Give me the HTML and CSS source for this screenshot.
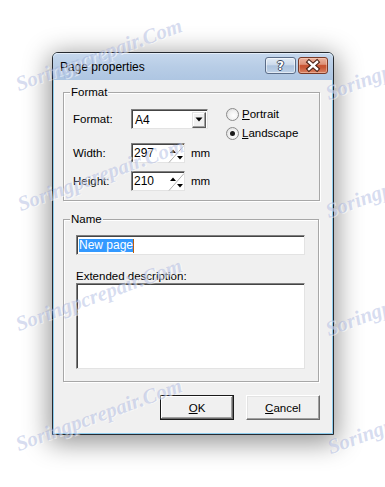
FILE: index.html
```html
<!DOCTYPE html>
<html>
<head>
<meta charset="utf-8">
<link rel="stylesheet" href="styles.css">
</head>
<body>
<div class="window">
  <div class="titlebar">
    <span class="title">Page properties</span>
    <div class="caption-btns">
      <div class="cbtn help"><span class="qmark">?</span></div>
      <div class="cbtn close">
        <svg width="28" height="15" viewBox="0 0 28 15">
          <path d="M10 4 L18 11 M18 4 L10 11" stroke="#4a2216" stroke-width="4.6" stroke-linecap="square"/>
          <path d="M10 4 L18 11 M18 4 L10 11" stroke="#ffffff" stroke-width="2.4" stroke-linecap="square"/>
        </svg>
      </div>
    </div>
  </div>
  <div class="client">
    <div class="group format-group">
      <span class="legend">Format</span>
      <div class="fields">
        <div class="row r1">
          <span class="lbl">Format:</span>
          <div class="combo">
            <span class="val">A4</span>
            <div class="dd">
              <svg width="8" height="5" viewBox="0 0 8 5"><polygon points="0.5,0.5 7.5,0.5 4,4.5" fill="#000"/></svg>
            </div>
          </div>
        </div>
        <div class="row r2">
          <span class="lbl">Width:</span>
          <div class="spin">
            <span class="val">297</span>
            <svg class="arrows" width="16" height="18" viewBox="0 0 16 18">
              <line x1="1" y1="17.5" x2="16" y2="0.5" stroke="#b0b0b0" stroke-width="1"/>
              <polygon points="2,8 5,4.5 8,8" fill="#000"/>
              <polygon points="9,11 15,11 12,14.5" fill="#000"/>
            </svg>
          </div>
          <span class="unit">mm</span>
        </div>
        <div class="row r3">
          <span class="lbl">Height:</span>
          <div class="spin">
            <span class="val">210</span>
            <svg class="arrows" width="16" height="18" viewBox="0 0 16 18">
              <line x1="1" y1="17.5" x2="16" y2="0.5" stroke="#b0b0b0" stroke-width="1"/>
              <polygon points="2,8 5,4.5 8,8" fill="#000"/>
              <polygon points="9,11 15,11 12,14.5" fill="#000"/>
            </svg>
          </div>
          <span class="unit">mm</span>
        </div>
      </div>
      <div class="radios">
        <div class="radio"><span class="circle"></span><span class="rtext"><u>P</u>ortrait</span></div>
        <div class="radio"><span class="circle checked"></span><span class="rtext"><u>L</u>andscape</span></div>
      </div>
    </div>

    <div class="group name-group">
      <span class="legend">Name</span>
      <div class="textbox"><span class="sel">New page</span><span class="caret"></span></div>
      <div class="desc-label">Extended description:</div>
      <div class="textarea"></div>
    </div>

    <div class="buttons">
      <div class="btn default"><span><u>O</u>K</span></div>
      <div class="btn"><span><u>C</u>ancel</span></div>
    </div>
  </div>
</div>

<span class="wm wm1">Soringpcrepair.Com</span>
<span class="wm wm2">Soringpcrepair.Com</span>
<span class="wm wm3">Soringpcrepair.Com</span>
<span class="wm wm4">Soringpcrepair.Com</span>
<span class="wm wm5">Soringpcrepair.Com</span>
<span class="wm wm6">Soringpcrepair.Com</span>
<span class="wm wm7">Soringpcrepair.Com</span>
<span class="wm wm8">Soringpcrepair.Com</span>
</body>
</html>
```
FILE: styles.css
```css
html, body {
  margin: 0;
  padding: 0;
  background: #ffffff;
}
body {
  position: relative;
  width: 385px;
  height: 487px;
  overflow: hidden;
  font-family: "Liberation Sans", Arial, sans-serif;
  font-size: 11px;
  color: #000;
}
.window {
  box-sizing: border-box;
  margin: 52px 0 0 52px;
  width: 282px;
  height: 383px;
  border: 1px solid #262a30;
  border-radius: 6px 6px 0 0;
  background: #8ecdee;
  display: flex;
  flex-direction: column;
  box-shadow: 0 5px 26px 3px rgba(0, 0, 0, 0.42);
}
.titlebar {
  height: 27px;
  flex: none;
  display: flex;
  align-items: flex-start;
  justify-content: space-between;
  padding: 0 5px 0 7px;
  border-radius: 5px 5px 0 0;
  background: linear-gradient(#c6d8ed 0%, #b8cde6 50%, #aec6e2 100%);
  box-shadow: inset 0 1px 0 #e4eef9;
}
.title {
  font-family: "Liberation Sans", Arial, sans-serif;
  font-size: 12px;
  line-height: 14px;
  margin-top: 7px;
  color: #000;
}
.caption-btns {
  display: flex;
  gap: 2px;
  margin-top: 4px;
}
.cbtn {
  box-sizing: border-box;
  height: 17px;
  border: 1px solid #5b6d88;
  border-radius: 3px;
  display: flex;
  align-items: center;
  justify-content: center;
}
.help {
  width: 31px;
  background: linear-gradient(#e3ecf6 0%, #ccdaeb 45%, #adc3de 52%, #bfd2e8 100%);
  box-shadow: inset 0 0 0 1px rgba(255, 255, 255, 0.55);
}
.qmark {
  font-family: "DejaVu Sans", sans-serif;
  font-weight: bold;
  font-size: 12px;
  line-height: 12px;
  color: #fff;
  text-shadow: 1px 0 0 #3b4a60, -1px 0 0 #3b4a60, 0 1px 0 #3b4a60, 0 -1px 0 #3b4a60;
}
.close {
  width: 30px;
  border-color: #7a3a28;
  background: linear-gradient(#eab29e 0%, #de9278 42%, #c85433 50%, #c75634 62%, #d98264 100%);
  box-shadow: inset 0 0 0 1px rgba(255, 220, 200, 0.45);
}
.client {
  flex: 1;
  margin: 0 1px 1px 1px;
  background: #f0f0f0;
  padding: 12px 12px 0 9px;
  display: flex;
  flex-direction: column;
}
.group {
  position: relative;
  box-sizing: border-box;
  border: 1px solid #a7a7a7;
  box-shadow: inset 1px 1px 0 #ffffff, 1px 1px 0 #ffffff;
}
.legend {
  position: absolute;
  left: 6px;
  top: -7px;
  padding: 0 1px;
  line-height: 13px;
  font-size: 11.5px;
  background: #f0f0f0;
}
.format-group {
  width: 257px;
  height: 109px;
  display: flex;
  padding: 16px 0 0 9px;
}
.fields {
  width: 153px;
  display: flex;
  flex-direction: column;
}
.row {
  display: flex;
  align-items: center;
  height: 20px;
  font-size: 11.5px;
}
.r2 { margin-top: 14px; }
.r3 { margin-top: 8px; }
.lbl {
  width: 58px;
  flex: none;
}
.combo, .spin, .textbox, .textarea {
  box-sizing: border-box;
  background: #fff;
  border: 1px solid;
  border-color: #7f7f7f #e3e3e3 #e3e3e3 #7f7f7f;
  box-shadow: inset 1px 1px 0 #444;
}
.combo {
  width: 77px;
  height: 20px;
  display: flex;
  align-items: center;
  padding-left: 3px;
}
.combo .val { flex: 1; margin-top: 2px; font-size: 12px; }
.dd {
  box-sizing: border-box;
  width: 14px;
  height: 16px;
  margin-right: 1px;
  margin-top: 1px;
  background: #f0f0f0;
  border: 1px solid;
  border-color: #e3e3e3 #5a5a5a #5a5a5a #e3e3e3;
  box-shadow: inset -1px -1px 0 #a0a0a0, inset 1px 1px 0 #fff;
  display: flex;
  align-items: center;
  justify-content: center;
}
.spin {
  width: 54px;
  height: 20px;
  display: flex;
  align-items: center;
  padding-left: 2px;
}
.spin .val { flex: 1; font-size: 12px; }
.spin .arrows { flex: none; margin-top: 1px; }
.unit { margin-left: 6px; }
.radios {
  display: flex;
  flex-direction: column;
  gap: 3px;
  margin-top: -3px;
}
.radio {
  display: flex;
  align-items: center;
  height: 16px;
  gap: 3px;
}
.circle {
  box-sizing: border-box;
  width: 13px;
  height: 13px;
  border-radius: 50%;
  border: 1px solid #8b8b8b;
  background: radial-gradient(circle at 60% 60%, #ffffff 0%, #f2f2f2 45%, #d6d6d6 100%);
  display: flex;
  align-items: center;
  justify-content: center;
}
.circle.checked::after {
  content: "";
  width: 5px;
  height: 5px;
  border-radius: 50%;
  background: #1b1b1b;
}
.rtext { font-size: 11.5px; }
.name-group {
  width: 256px;
  height: 163px;
  margin-top: 18px;
  padding: 15px 0 0 12px;
  display: flex;
  flex-direction: column;
}
.textbox {
  width: 229px;
  height: 20px;
  display: flex;
  align-items: center;
  padding-left: 2px;
  padding-top: 1px;
}
.sel {
  background: #3399ff;
  color: #fff;
  font-size: 12px;
  line-height: 13px;
}
.caret {
  width: 1px;
  height: 14px;
  background: #b8600e;
}
.desc-label {
  margin-top: 15px;
  line-height: 13px;
  font-size: 11.5px;
}
.textarea {
  width: 229px;
  height: 86px;
}
.buttons {
  display: flex;
  justify-content: flex-end;
  gap: 12px;
  margin-top: 13px;
}
.btn {
  box-sizing: border-box;
  width: 74px;
  height: 25px;
  display: flex;
  align-items: center;
  justify-content: center;
  background: #f0f0f0;
  border: 1px solid;
  border-color: #ffffff #6b6b6b #6b6b6b #ffffff;
  box-shadow: inset -1px -1px 0 #a0a0a0, inset 1px 1px 0 #e3e3e3;
  font-size: 11.5px;
}
.btn.default {
  border: 1px solid #1a1a1a;
  box-shadow: inset -1px -1px 0 #6b6b6b, inset 1px 1px 0 #ffffff, inset -2px -2px 0 #a0a0a0;
}

/* watermark overlay */
.wm {
  position: absolute;
  white-space: nowrap;
  font-family: "Liberation Serif", "Times New Roman", serif;
  font-style: italic;
  font-weight: bold;
  font-size: 21px;
  line-height: 22px;
  color: rgba(150, 165, 215, 0.38);
  text-shadow: 1px 1px 0 rgba(255, 255, 255, 0.5);
  transform: rotate(-20deg);
  transform-origin: 0 100%;
  pointer-events: none;
}
.wm1 { left: 20px; top: 73px; }
.wm2 { left: 22px; top: 193px; }
.wm3 { left: 20px; top: 313px; }
.wm4 { left: 20px; top: 433px; }
.wm5 { left: 330px; top: 82px; }
.wm6 { left: 330px; top: 200px; }
.wm7 { left: 330px; top: 318px; }
.wm8 { left: 332px; top: 436px; }
```
